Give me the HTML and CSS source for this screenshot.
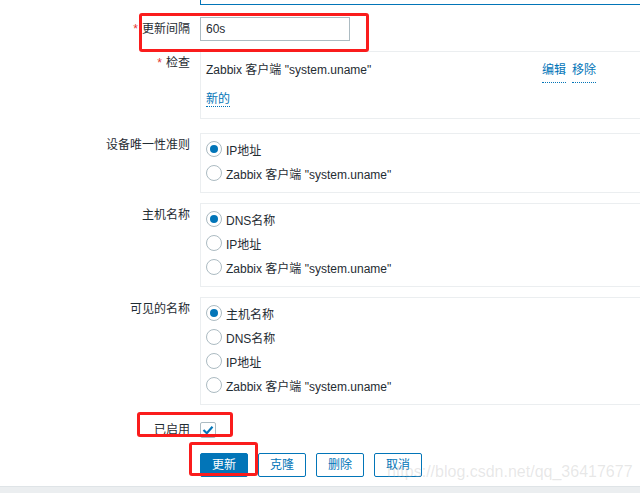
FILE: index.html
```html
<!DOCTYPE html>
<html lang="zh">
<head>
<meta charset="utf-8">
<link rel="stylesheet" href="styles.css">
</head>
<body>
<div class="page">
  <div class="top-box"></div>
  <ul class="form">
    <li class="row">
      <div class="lbl"><span class="req">*</span>更新间隔</div>
      <div class="field"><input class="text" type="text" value="60s"></div>
    </li>
    <li class="row">
      <div class="lbl"><span class="req">*</span>检查</div>
      <div class="field box check-box">
        <div class="check-line">
          <span class="check-name">Zabbix 客户端 "system.uname"</span>
          <span class="check-actions"><a class="link">编辑</a><a class="link">移除</a></span>
        </div>
        <div class="check-new"><a class="link">新的</a></div>
      </div>
    </li>
    <li class="row row-gap">
      <div class="lbl">设备唯一性准则</div>
      <ul class="field box radio-list">
        <li><span class="radio on"></span>IP地址</li>
        <li><span class="radio"></span>Zabbix 客户端 "system.uname"</li>
      </ul>
    </li>
    <li class="row">
      <div class="lbl">主机名称</div>
      <ul class="field box radio-list">
        <li><span class="radio on"></span>DNS名称</li>
        <li><span class="radio"></span>IP地址</li>
        <li><span class="radio"></span>Zabbix 客户端 "system.uname"</li>
      </ul>
    </li>
    <li class="row">
      <div class="lbl">可见的名称</div>
      <ul class="field box radio-list">
        <li><span class="radio on"></span>主机名称</li>
        <li><span class="radio"></span>DNS名称</li>
        <li><span class="radio"></span>IP地址</li>
        <li><span class="radio"></span>Zabbix 客户端 "system.uname"</li>
      </ul>
    </li>
    <li class="row row-enabled">
      <div class="lbl">已启用</div>
      <div class="field field-center">
        <span class="checkbox"><svg width="14" height="14" viewBox="0 0 14 14"><polyline points="2.5,7 5.8,10.2 11.5,3.8" fill="none" stroke="#0275b8" stroke-width="2.2"/></svg></span>
      </div>
    </li>
    <li class="row row-buttons">
      <div class="lbl"></div>
      <div class="field buttons">
        <button class="btn primary">更新</button>
        <button class="btn">克隆</button>
        <button class="btn">删除</button>
        <button class="btn">取消</button>
      </div>
    </li>
  </ul>
  <div class="footer-bar"></div>
  <div class="watermark">https://blog.csdn.net/qq_36417677</div>
  <div class="mark mark-1"></div>
  <div class="mark mark-2"></div>
  <div class="mark mark-3"></div>
</div>
</body>
</html>
```
FILE: styles.css
```css
* { box-sizing: border-box; }
html, body { margin: 0; padding: 0; background: #fff; }
body {
  font-family: "Liberation Sans", Arial, "Noto Sans CJK SC", sans-serif;
  font-size: 12px;
  color: #1f2c33;
  overflow: hidden;
}
.page { position: relative; width: 640px; height: 493px; overflow: hidden; }
.top-box {
  height: 5px;
  margin-left: 200px;
  width: 460px;
  border-left: 1px solid #0275b8;
  border-bottom: 1px solid #0275b8;
}
ul { list-style: none; margin: 0; padding: 0; }
.form { display: flex; flex-direction: column; gap: 10px; margin-top: 12px; }
.row { display: flex; align-items: flex-start; gap: 10px; }
.row-gap { margin-top: 4px; }
.row-enabled { align-items: center; height: 24px; margin-top: 3px; }
.row-buttons { margin-top: 1px; }
.lbl {
  width: 190px;
  flex: none;
  text-align: right;
  line-height: 24px;
  white-space: nowrap;
}
.req { color: #e33734; margin-right: 4px; }
.field { flex: none; }
.text {
  display: block;
  width: 150px;
  height: 24px;
  border: 1px solid #acbbc2;
  padding: 0 5px;
  font: inherit;
  color: #1f2c33;
  background: #fff;
  outline: none;
}
.box {
  width: 460px;
  border: 1px solid #ebeef0;
  background: #fff;
}
.check-box { padding: 6px 5px 7px; }
.check-line { display: flex; line-height: 24px; }
.check-name { width: 336px; flex: none; }
.check-actions { display: flex; gap: 6px; }
.check-new { margin-top: 4px; line-height: 24px; }
.link {
  color: #0275b8;
  border-bottom: 1px dotted #0275b8;
  cursor: pointer;
}
.radio-list { padding: 3px 5px 7px; }
.radio-list li {
  display: flex;
  align-items: center;
  gap: 4px;
  height: 24px;
}
.radio {
  width: 16px;
  height: 16px;
  border: 1px solid #acbbc2;
  border-radius: 50%;
  flex: none;
  display: flex;
  align-items: center;
  justify-content: center;
}
.radio.on::after {
  content: "";
  width: 8px;
  height: 8px;
  border-radius: 50%;
  background: #0275b8;
}
.field-center { display: flex; align-items: center; }
.checkbox {
  width: 16px;
  height: 16px;
  border: 1px solid #acbbc2;
  border-radius: 2px;
  display: flex;
  align-items: center;
  justify-content: center;
}
.buttons { display: flex; gap: 10px; }
.btn {
  width: 48px;
  height: 24px;
  padding: 0;
  border: 1px solid #0275b8;
  border-radius: 2px;
  background: #fff;
  color: #0275b8;
  font: inherit;
  line-height: 22px;
}
.btn.primary { background: #0275b8; color: #fff; }
.footer-bar {
  position: absolute;
  left: 0; right: 0; top: 486px; bottom: 0;
  background: #ebeef0;
  border-top: 1px solid #dfe4e7;
}
.watermark {
  position: absolute;
  left: 387px;
  top: 463px;
  font-family: "Liberation Sans", Arial, sans-serif;
  font-size: 16px;
  color: rgba(170, 170, 170, 0.28);
  white-space: nowrap;
}
.mark {
  position: absolute;
  border: 3px solid #fa1c1c;
  border-radius: 3px;
}
.mark-1 { left: 139px; top: 13px; width: 230px; height: 39px; }
.mark-2 { left: 137px; top: 412px; width: 96px; height: 25px; }
.mark-3 { left: 189px; top: 442px; width: 69px; height: 34px; }
```
